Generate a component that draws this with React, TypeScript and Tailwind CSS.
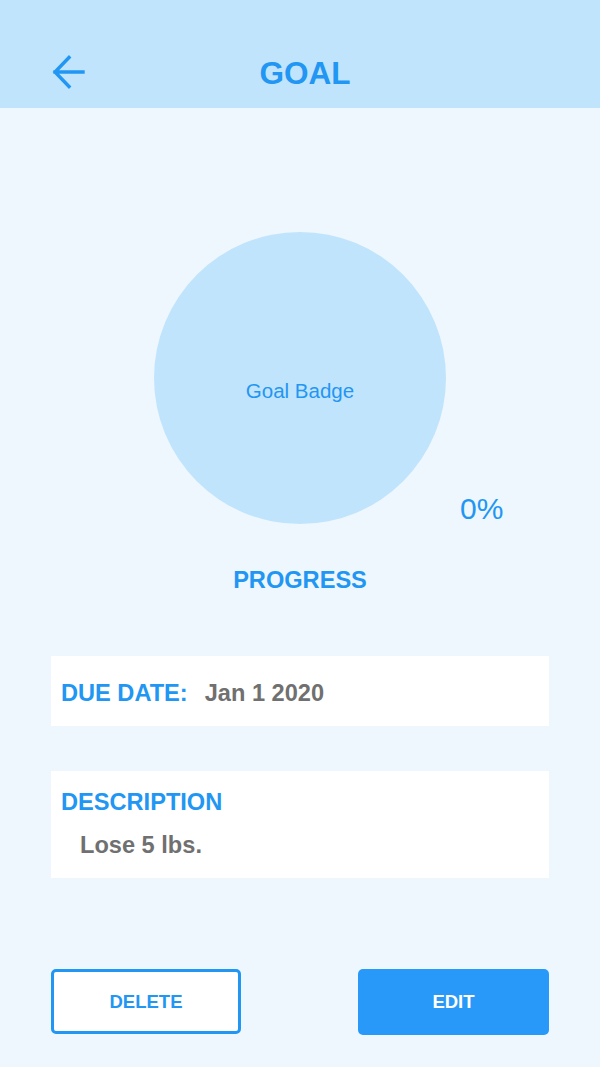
import React from "react";

export default function App() {
  const font = { fontFamily: '"Liberation Sans", Arial, sans-serif' };
  return (
    <div
      className="w-[600px] min-h-[1067px] bg-[#eff7fe] flex flex-col"
      style={font}
    >
      {/* Header */}
      <div className="relative h-[108px] bg-[#c1e4fd] flex items-start justify-center pt-[55px]">
        <button className="absolute left-[51px] top-[55px] w-[34px] h-[34px] flex items-center justify-center">
          <svg width="34" height="34" viewBox="0 0 34 34" fill="none">
            <path
              d="M32 17H4M18 2.5L4 17l14 14.5"
              stroke="#2196f3"
              strokeWidth="3.4"
              strokeLinecap="square"
              strokeLinejoin="miter"
            />
          </svg>
        </button>
        <h1 className="ml-[10px] text-[31.5px] leading-[36px] font-bold text-[#2196f3]">
          GOAL
        </h1>
      </div>

      {/* Badge */}
      <div className="relative w-[292px] h-[292px] mx-auto mt-[124px]">
        <div className="w-[292px] h-[292px] rounded-full bg-[#c1e4fd] flex justify-center pt-[147px]">
          <span className="text-[20.5px] leading-[24px] text-[#2196f3]">
            Goal Badge
          </span>
        </div>
        <span className="absolute left-[306px] top-[259px] text-[30px] leading-[36px] text-[#2196f3] whitespace-nowrap">
          0%
        </span>
      </div>

      <div className="mt-[42px] flex justify-center">
        <span className="text-[23.6px] leading-[28px] font-bold text-[#2196f3]">
          PROGRESS
        </span>
      </div>

      {/* Due date */}
      <div className="mx-[51px] mt-[62px] h-[70px] bg-white pl-[10px] pt-[23px] flex items-start">
        <span className="text-[23.6px] leading-[28px] font-bold text-[#2196f3]">
          DUE DATE:
        </span>
        <span className="ml-[17px] text-[23.6px] leading-[28px] font-bold text-[#707070]">
          Jan 1 2020
        </span>
      </div>

      {/* Description */}
      <div className="mx-[51px] mt-[45px] h-[107px] bg-white pl-[10px] pt-[17px] flex flex-col">
        <span className="text-[23.6px] leading-[28px] font-bold text-[#2196f3]">
          DESCRIPTION
        </span>
        <span className="mt-[15px] ml-[19px] text-[23.6px] leading-[28px] font-bold text-[#707070]">
          Lose 5 lbs.
        </span>
      </div>

      {/* Buttons */}
      <div className="mx-[51px] mt-[91px] flex justify-between">
        <button className="w-[190px] h-[65px] rounded-[5px] border-[3px] border-[#2196f3] bg-white flex items-center justify-center">
          <span className="text-[18.5px] font-bold text-[#2196f3]">DELETE</span>
        </button>
        <button className="w-[191px] h-[66px] rounded-[5px] bg-[#2899f9] flex items-center justify-center">
          <span className="text-[18.5px] font-bold text-white">EDIT</span>
        </button>
      </div>
    </div>
  );
}
